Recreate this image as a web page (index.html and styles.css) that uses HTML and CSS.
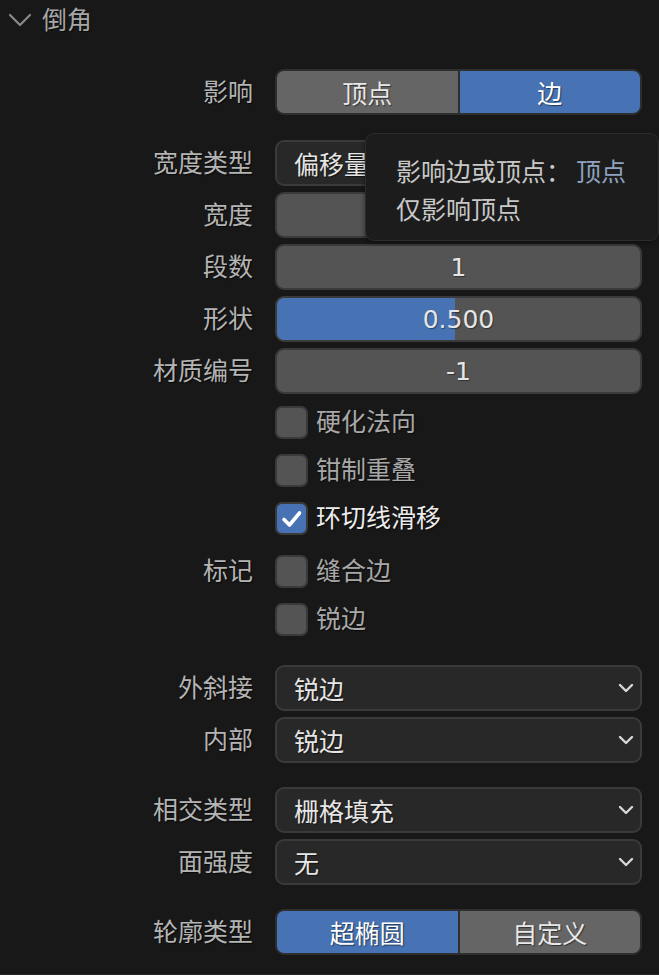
FILE: index.html
```html
<!DOCTYPE html>
<html lang="zh">
<head>
<meta charset="utf-8">
<link rel="stylesheet" href="styles.css">
</head>
<body>
<div class="panel">
  <div class="header">
    <svg class="hchev" width="24" height="14" viewBox="0 0 24 14"><path d="M2 2 L12 12 L22 2" fill="none" stroke="#8a8a8a" stroke-width="2.2" stroke-linecap="round" stroke-linejoin="round"/></svg>
    <span class="htitle">倒角</span>
  </div>

  <div class="group g1">
    <div class="row">
      <div class="label">影响</div>
      <div class="seg">
        <div class="seg-item">顶点</div>
        <div class="seg-item active">边</div>
      </div>
    </div>
  </div>

  <div class="group g2">
    <div class="row">
      <div class="label">宽度类型</div>
      <div class="dropdown"><span>偏移量</span><svg class="dchev" width="16" height="10" viewBox="0 0 16 10"><path d="M2 2 L8 8 L14 2" fill="none" stroke="#d8d8d8" stroke-width="2.4" stroke-linecap="round" stroke-linejoin="round"/></svg></div>
    </div>
    <div class="row">
      <div class="label">宽度</div>
      <div class="field"></div>
    </div>
    <div class="row">
      <div class="label">段数</div>
      <div class="field">1</div>
    </div>
    <div class="row">
      <div class="label">形状</div>
      <div class="field slider"><div class="fill" style="width:49%"></div><span class="val">0.500</span></div>
    </div>
    <div class="row">
      <div class="label">材质编号</div>
      <div class="field">-1</div>
    </div>
  </div>

  <div class="group g3">
    <div class="crow"><div class="label"></div><div class="check"><span class="box"></span><span class="ctext">硬化法向</span></div></div>
    <div class="crow"><div class="label"></div><div class="check"><span class="box"></span><span class="ctext">钳制重叠</span></div></div>
    <div class="crow"><div class="label"></div><div class="check on"><span class="box"><svg width="33" height="33" viewBox="0 0 33 33"><path d="M9 17.5 L14.5 23 L24.5 11" fill="none" stroke="#ffffff" stroke-width="3.6" stroke-linecap="round" stroke-linejoin="round"/></svg></span><span class="ctext">环切线滑移</span></div></div>
  </div>

  <div class="group g4">
    <div class="crow"><div class="label">标记</div><div class="check"><span class="box"></span><span class="ctext">缝合边</span></div></div>
    <div class="crow"><div class="label"></div><div class="check"><span class="box"></span><span class="ctext">锐边</span></div></div>
  </div>

  <div class="group g5">
    <div class="row">
      <div class="label">外斜接</div>
      <div class="dropdown"><span>锐边</span><svg class="dchev" width="16" height="10" viewBox="0 0 16 10"><path d="M2 2 L8 8 L14 2" fill="none" stroke="#d8d8d8" stroke-width="2.4" stroke-linecap="round" stroke-linejoin="round"/></svg></div>
    </div>
    <div class="row">
      <div class="label">内部</div>
      <div class="dropdown"><span>锐边</span><svg class="dchev" width="16" height="10" viewBox="0 0 16 10"><path d="M2 2 L8 8 L14 2" fill="none" stroke="#d8d8d8" stroke-width="2.4" stroke-linecap="round" stroke-linejoin="round"/></svg></div>
    </div>
  </div>

  <div class="group g6">
    <div class="row">
      <div class="label">相交类型</div>
      <div class="dropdown"><span>栅格填充</span><svg class="dchev" width="16" height="10" viewBox="0 0 16 10"><path d="M2 2 L8 8 L14 2" fill="none" stroke="#d8d8d8" stroke-width="2.4" stroke-linecap="round" stroke-linejoin="round"/></svg></div>
    </div>
    <div class="row">
      <div class="label">面强度</div>
      <div class="dropdown"><span>无</span><svg class="dchev" width="16" height="10" viewBox="0 0 16 10"><path d="M2 2 L8 8 L14 2" fill="none" stroke="#d8d8d8" stroke-width="2.4" stroke-linecap="round" stroke-linejoin="round"/></svg></div>
    </div>
  </div>

  <div class="group g7">
    <div class="row">
      <div class="label">轮廓类型</div>
      <div class="seg">
        <div class="seg-item active">超椭圆</div>
        <div class="seg-item">自定义</div>
      </div>
    </div>
  </div>

  <div class="tooltip">
    <div class="tline">影响边或顶点：<span class="tval">顶点</span></div>
    <div class="tline">仅影响顶点</div>
  </div>
</div>
</body>
</html>
```

FILE: styles.css
```css
* { box-sizing: border-box; }
html, body {
  margin: 0;
  padding: 0;
  background: #181818;
}
body {
  width: 659px;
  height: 975px;
  overflow: hidden;
  font-family: "DejaVu Sans", "Noto Sans CJK SC", sans-serif;
  font-size: 25px;
  color: #e6e6e6;
}
.panel {
  position: relative;
  height: 975px;
  border-bottom: 1px solid #262626;
}
.header {
  height: 40px;
  display: flex;
  align-items: center;
  padding-left: 8px;
  gap: 10px;
}
.hchev { display: block; }
.htitle {
  color: #a6a6a6;
  font-size: 25px;
  line-height: 1;
  text-shadow: 1px 1px 1px rgba(0,0,0,0.6);
}
.group { display: flex; flex-direction: column; gap: 6px; }
.g1 { margin-top: 29px; }
.g2 { margin-top: 25px; }
.g3 { margin-top: 4px; gap: 0; }
.g4 { margin-top: 5px; gap: 0; }
.g5 { margin-top: 22px; }
.g6 { margin-top: 24px; }
.g7 { margin-top: 24px; }

.row, .crow {
  display: grid;
  grid-template-columns: 253px 367px;
  column-gap: 22px;
  align-items: center;
}
.row { height: 46px; }
.crow { height: 48px; }
.label {
  text-align: right;
  color: #b4b4b4;
  line-height: 1;
  text-shadow: 1px 1px 1px rgba(0,0,0,0.7);
}
.seg {
  height: 46px;
  display: grid;
  grid-template-columns: 1fr 1fr;
  border: 2px solid #2e2e2e;
  border-radius: 9px;
  overflow: hidden;
  background: #2e2e2e;
  column-gap: 2px;
}
.seg-item {
  display: flex;
  align-items: center;
  justify-content: center;
  background: #656565;
  color: #e8e8e8;
  text-shadow: 1px 1px 1px rgba(0,0,0,0.5);
}
.seg-item.active { background: #4772b3; color: #ffffff; }

.field {
  height: 46px;
  background: #545454;
  border: 2px solid #3a3a3a;
  border-radius: 9px;
  display: flex;
  align-items: center;
  justify-content: center;
  color: #e6e6e6;
  text-shadow: 1px 1px 1px rgba(0,0,0,0.4);
  position: relative;
  overflow: hidden;
}
.slider .fill {
  position: absolute;
  left: 0; top: 0; bottom: 0;
  background: #4772b3;
}
.slider .val { position: relative; }

.dropdown {
  height: 46px;
  background: #282828;
  border: 2px solid #3a3a3a;
  border-radius: 9px;
  display: flex;
  align-items: center;
  justify-content: space-between;
  padding: 0 6px 0 17px;
  color: #e6e6e6;
  text-shadow: 1px 1px 1px rgba(0,0,0,0.5);
}
.dchev { display: block; }

.check {
  display: flex;
  align-items: center;
  gap: 8px;
}
.box {
  width: 33px;
  height: 33px;
  border-radius: 7px;
  background: #545454;
  border: 2px solid #3a3a3a;
  display: flex;
  align-items: center;
  justify-content: center;
  flex: none;
}
.box svg { display: block; margin: -2px; }
.ctext {
  color: #a8a8a8;
  line-height: 1;
  text-shadow: 1px 1px 1px rgba(0,0,0,0.6);
}
.check.on .box { background: #4772b3; }
.check.on .ctext { color: #ececec; }

.tooltip {
  position: absolute;
  left: 365px;
  top: 133px;
  width: 294px;
  height: 108px;
  background: #1c1c1c;
  border: 1px solid #2c2c2c;
  border-radius: 9px;
  padding: 20px 0 0 30px;
  box-shadow: -1px 2px 4px rgba(0,0,0,0.35);
}
.tline {
  color: #c8c8c8;
  font-size: 25px;
  line-height: 38px;
  white-space: nowrap;
}
.tval { color: #8fa2bf; margin-left: 5px; }
```
